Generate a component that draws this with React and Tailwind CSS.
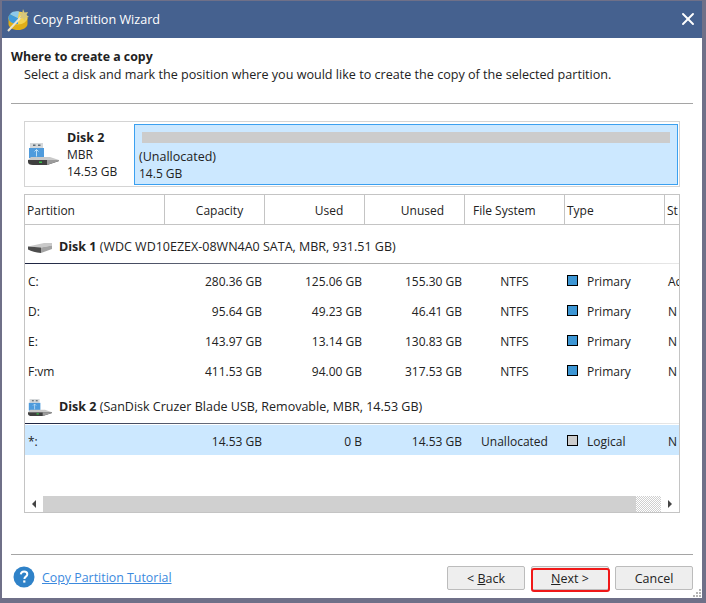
import { X } from "lucide-react";

const cols = "grid grid-cols-[140px_100px_100px_100px_100px_100px_1fr]";

const disk1Rows = [
  { name: "C:", cap: "280.36 GB", used: "125.06 GB", unused: "155.30 GB", status: "Ac" },
  { name: "D:", cap: "95.64 GB", used: "49.23 GB", unused: "46.41 GB", status: "N" },
  { name: "E:", cap: "143.97 GB", used: "13.14 GB", unused: "130.83 GB", status: "N" },
  { name: "F:vm", cap: "411.53 GB", used: "94.00 GB", unused: "317.53 GB", status: "N" },
];

function AppLogo() {
  return (
    <svg width="24" height="24" viewBox="0 0 24 24" className="shrink-0">
      <path d="M1.5 10v6c0 3.3 4.2 6 9.5 6s9.5-2.7 9.5-6v-6z" fill="#e0ae18" />
      <ellipse cx="11" cy="10" rx="9.5" ry="6.5" fill="#f4d34e" />
      <path d="M11 10 L3 6 C1 8 1 11 2.5 13 C5 15.5 8 16 11 16z" fill="#3f9adb" />
      <path d="M11 10 L3 6 C5 3.5 9 3 12 3.5z" fill="#8cc8ec" />
      <path d="M1 23 L15 8" stroke="#e9e4d2" strokeWidth="2" />
      <path d="M16 1l1.5 3.5L21 4l-1.5 3 2.5 2-3.5.8L18 13l-2.3-3-3.2.5 1.5-3-2-2.5 3.2.2z" fill="#d8c77a" />
    </svg>
  );
}

function UsbDisk({ small }) {
  const size = small ? "w-[24px] h-[17px]" : "w-[31px] h-[22px]";
  return (
    <svg viewBox="0 0 31 22" className={`${size} shrink-0`}>
      <rect x="2" y="0" width="13" height="5" fill="#d5d8da" />
      <rect x="5" y="1.5" width="2.5" height="1.5" fill="#5d6a75" />
      <rect x="10" y="1.5" width="2.5" height="1.5" fill="#5d6a75" />
      <rect x="1" y="5" width="15" height="10" fill="#4f9bdc" />
      <path d="M8.5 6.5v7M6.5 8.5l2-2 2 2" stroke="#bfe0f7" strokeWidth="1" fill="none" />
      <path d="M0 17 L3 14 H22 L31 17 Z" fill="#c9c9c9" />
      <path d="M0 17 H31 V18 L19 22 H5 Q0 22 0 19 Z" fill="#3f3f3f" />
      <path d="M19 22 L31 18 V17 H19 Z" fill="#9b9b9b" />
      <rect x="11" y="18.5" width="3" height="1.5" fill="#39c24a" />
    </svg>
  );
}

function HardDisk() {
  return (
    <svg viewBox="0 0 24 10" className="w-[24px] h-[10px] shrink-0">
      <path d="M0 3.5 L16 0 H24 V2.5 L13 4.5 Z" fill="#c9c9c9" />
      <path d="M0 3.5 L13 4.5 V10 Q5 9 0 6.5 Z" fill="#4d4d4d" />
      <path d="M13 4.5 L24 2.5 V6 L13 10 Z" fill="#a3a3a3" />
    </svg>
  );
}

function HeaderCell({ children, className = "" }) {
  return <div className={`flex items-center pt-[2px] border-r border-[#c4c4c4] ${className}`}>{children}</div>;
}

function PartitionRow({ row, fs, swatch, type, selected }) {
  return (
    <div className={`${cols} h-[30px] items-center ${selected ? "bg-[#cce8ff] pt-[3px]" : ""}`}>
      <span className="pl-[3px]">{row.name}</span>
      <span className="text-right pr-[3px]">{row.cap}</span>
      <span className="text-right pr-[3px]">{row.used}</span>
      <span className="text-right pr-[3px]">{row.unused}</span>
      <span className="text-center pr-[1px]">{fs}</span>
      <span className="flex items-center pl-[2px]">
        <span className={`w-[11px] h-[11px] mr-[9px] -mt-[3px] border border-black ${swatch}`} />
        {type}
      </span>
      <span className="pl-[3px] overflow-hidden whitespace-nowrap">{row.status}</span>
    </div>
  );
}

function DiskHeading({ icon, name, desc, className }) {
  return (
    <div className="shrink-0 flex flex-col">
      <div className={`flex items-center pl-[3px] gap-[7px] text-[12.5px] ${className}`}>
        {icon}
        <span>
          <b className="font-bold">{name}</b> ({desc})
        </span>
      </div>
      <div className="h-px bg-linear-to-r from-[#1c2340] via-[#a8a8a8] to-[#e8e8e8]" />
    </div>
  );
}

function WizardButton({ children, highlighted }) {
  return (
    <button className="relative w-[78px] h-[24px] rounded-[2px] flex items-center justify-center pt-[2px] text-[12.5px] bg-[#eeeeee] border border-[#bcbcbc]">
      {children}
      {highlighted && (
        <span className="absolute top-[1px] -left-[1px] -right-[2px] -bottom-[3px] border-2 border-[#f01818] rounded-[3px]" />
      )}
    </button>
  );
}

export default function App() {
  return (
    <div className="w-[706px] h-[603px] bg-[#6f7088] pt-[1px] pl-[2px] overflow-hidden font-['Open_Sans',sans-serif] text-[12px] text-[#222222]">
      <div className="w-[700px] h-[597px] bg-white flex flex-col">
        {/* TITLE BAR */}
        <div className="h-[37px] shrink-0 bg-[#45618f] text-white flex items-center pl-[5px] pr-[4px]">
          <AppLogo />
          <span className="ml-[2px] pt-[1px] text-[12.6px]">Copy Partition Wizard</span>
          <X size={20} strokeWidth={2.3} className="ml-auto -mt-[2px]" />
        </div>

        <div className="flex-1 flex flex-col px-[9px] relative">
          {/* HEADING */}
          <div className="h-[66px] shrink-0 border-b border-[#a5a5a5] pt-[10px]">
            <div className="font-bold leading-[18px] text-[12.35px]">Where to create a copy</div>
            <div className="pl-[13px] leading-[18px] text-[12.6px]">
              Select a disk and mark the position where you would like to create the copy of the selected partition.
            </div>
          </div>

          <div className="mx-[13px] flex-1 flex flex-col">
            {/* DISK MAP */}
            <div className="mt-[17px] h-[66px] shrink-0 border border-[#d4d4d4] flex items-center pr-[1px]">
              <div className="w-[109px] flex items-center pl-[3px]">
                <UsbDisk />
                <div className="ml-[8px] mt-[1px] leading-[17px] whitespace-nowrap">
                  <div className="font-bold text-[12.5px]">Disk 2</div>
                  <div>MBR</div>
                  <div>14.53 GB</div>
                </div>
              </div>
              <div className="flex-1 h-[61px] bg-[#cce8ff] border border-[#3aa0f0] px-[7px] pt-[7px]">
                <div className="h-[11px] bg-[#cccccc]" />
                <div className="-ml-[3px] mt-[5px] leading-[17px]">
                  <div className="text-[12.5px]">(Unallocated)</div>
                  <div>14.5 GB</div>
                </div>
              </div>
            </div>

            {/* PARTITION TABLE */}
            <div className="mt-[7px] h-[319px] shrink-0 border border-[#c4c4c4] flex flex-col overflow-hidden">
              <div className={`${cols} h-[30px] shrink-0 border-b border-[#c4c4c4]`}>
                <HeaderCell className="pl-[2px]">Partition</HeaderCell>
                <HeaderCell className="justify-center pl-[10px]">Capacity</HeaderCell>
                <HeaderCell className="justify-center pl-[29px]">Used</HeaderCell>
                <HeaderCell className="justify-center pl-[16px]">Unused</HeaderCell>
                <HeaderCell className="pl-[8px]">File System</HeaderCell>
                <HeaderCell className="pl-[2px]">Type</HeaderCell>
                <div className="flex items-center pt-[2px] pl-[2px] overflow-hidden">St</div>
              </div>

              <DiskHeading
                icon={<HardDisk />}
                name="Disk 1"
                desc="WDC WD10EZEX-08WN4A0 SATA, MBR, 931.51 GB"
                className="h-[38px] pt-[7px]"
              />
              <div className="pt-[3px] shrink-0">
                {disk1Rows.map((row) => (
                  <PartitionRow key={row.name} row={row} fs="NTFS" swatch="bg-[#3d96d4]" type="Primary" />
                ))}
              </div>
              <DiskHeading
                icon={<UsbDisk small />}
                name="Disk 2"
                desc="SanDisk Cruzer Blade USB, Removable, MBR, 14.53 GB"
                className="h-[36px] pt-[4px]"
              />
              <div className="pt-[1px] shrink-0">
                <PartitionRow
                  row={{ name: "*:", cap: "14.53 GB", used: "0 B", unused: "14.53 GB", status: "N" }}
                  fs="Unallocated"
                  swatch="bg-[#cccccc]"
                  type="Logical"
                  selected
                />
              </div>

              {/* SCROLLBAR */}
              <div className="mt-auto h-[16px] shrink-0 flex items-center">
                <div className="w-[18px] flex justify-center">
                  <span className="border-y-[4px] border-r-[4px] border-y-transparent border-r-[#444444]" />
                </div>
                <div className="flex-1 h-full bg-[#d0d0d0]" />
                <div className="w-[25px] h-full bg-[repeating-conic-gradient(#cfcfcf_0_25%,#ffffff_0_50%)] bg-[length:2px_2px]" />
                <div className="w-[18px] flex justify-center">
                  <span className="border-y-[4px] border-l-[4px] border-y-transparent border-l-[#444444]" />
                </div>
              </div>
            </div>
          </div>

          {/* FOOTER */}
          <div className="h-[44px] shrink-0 border-t border-[#a5a5a5] flex items-start pt-[11px]">
            <svg width="22" height="22" viewBox="0 0 22 22" className="ml-[2px] shrink-0">
              <circle cx="11" cy="11" r="10.5" fill="#2f82c8" />
              <path d="M7.8 8.4c.2-1.9 1.5-2.9 3.3-2.9 1.9 0 3.2 1.1 3.2 2.7 0 2.4-2.9 2.4-2.9 4.7" fill="none" stroke="#fff" strokeWidth="2" />
              <rect x="10.2" y="14.4" width="2.2" height="2.2" fill="#fff" />
            </svg>
            <a className="ml-[7px] mt-[3px] text-[12.4px] text-[#3c8ade] underline leading-[18px]">Copy Partition Tutorial</a>
            <div className="ml-auto flex gap-[6px]">
              <WizardButton>
                &lt;&nbsp;<u>B</u>ack
              </WizardButton>
              <WizardButton highlighted>
                <u>N</u>ext &gt;
              </WizardButton>
              <WizardButton>Cancel</WizardButton>
            </div>
          </div>

          {/* GRIPPER */}
          <svg width="8" height="8" viewBox="0 0 8 8" className="absolute right-[1px] bottom-[1px]">
            <path d="M6 0h2v2H6zM3 3h2v2H3zM6 3h2v2H6zM0 6h2v2H0zM3 6h2v2H3zM6 6h2v2H6z" fill="#b5b5b5" />
          </svg>
        </div>
      </div>
    </div>
  );
}
